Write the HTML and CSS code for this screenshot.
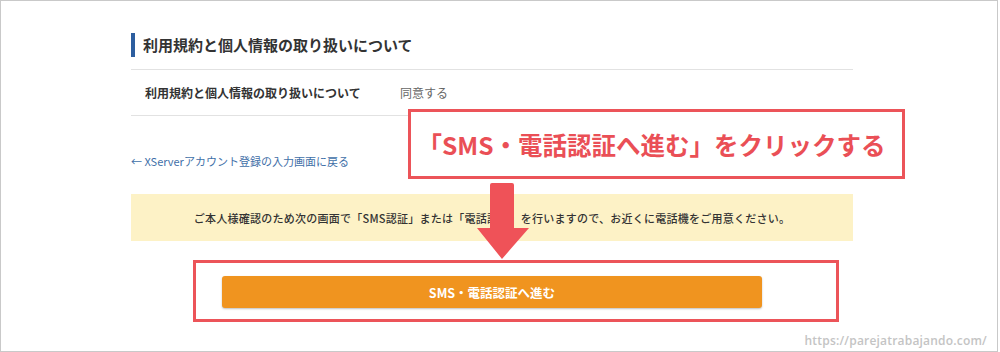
FILE: index.html
```html
<!DOCTYPE html>
<html lang="ja">
<head>
  <meta charset="UTF-8"/>
  <title>利用規約と個人情報の取り扱いについて</title>
  <link rel="stylesheet" href="styles.css">
</head>
<body>
<div class="frame">
  <div class="content">
    <div class="section-head">
      <h2 class="section-title">利用規約と個人情報の取り扱いについて</h2>
    </div>
    <div class="agree-row">
      <span class="agree-label">利用規約と個人情報の取り扱いについて</span>
      <span class="agree-value">同意する</span>
    </div>
    <a class="back-link" href="#">← XServerアカウント登録の入力画面に戻る</a>
    <div class="notice">ご本人様確認のため次の画面で「SMS認証」または「電話認証」を行いますので、お近くに電話機をご用意ください。</div>
    <div class="mark-box">
      <button type="button" class="next-btn">SMS・電話認証へ進む</button>
    </div>
  </div>

  <div class="callout">「SMS・電話認証へ進む」をクリックする</div>
  <svg class="arrow" width="54" height="78" viewBox="0 0 54 78">
    <path d="M16 1 H36 Q38 1 38 3 V46 H53 L26 77 L1 46 H14 V3 Q14 1 16 1 Z" fill="#ef5258"/>
  </svg>
  <span class="watermark">https://parejatrabajando.com/</span>
</div>
</body>
</html>
```

FILE: styles.css
```css
body {
  margin: 0;
  background: #fff;
  font-family: "Noto Sans CJK JP", "Noto Sans", sans-serif;
  color: #333;
}

.frame {
  position: relative;
  width: 998px;
  height: 352px;
  box-sizing: border-box;
  border: 1px solid #c9c9c9;
  overflow: hidden;
}

.content {
  margin-left: 130px;
  width: 722px;
  padding-top: 32px;
}

.section-head {
  padding-bottom: 12px;
  border-bottom: 1px solid #e2e2e2;
}

.section-title {
  margin: 0;
  border-left: 4px solid #2d5e9f;
  padding-left: 8px;
  font-size: 15px;
  line-height: 24px;
  font-weight: bold;
  color: #333;
}

.agree-row {
  display: grid;
  grid-template-columns: 255px 1fr;
  align-items: center;
  height: 45px;
  padding-left: 14px;
  border-bottom: 1px solid #e2e2e2;
  font-size: 12px;
}

.agree-label {
  font-weight: bold;
  color: #333;
}

.agree-value {
  color: #666;
}

.back-link {
  display: block;
  margin-top: 38px;
  font-size: 11px;
  line-height: 14px;
  color: #3f70a8;
  text-decoration: none;
}

.notice {
  margin-top: 26px;
  height: 47px;
  display: flex;
  align-items: center;
  justify-content: center;
  background: #fdf2c6;
  font-size: 11px;
  letter-spacing: 0.25px;
  font-weight: 500;
  color: #333;
}

.mark-box {
  margin: 19px 0 0 62px;
  width: 646px;
  height: 62px;
  box-sizing: border-box;
  border: 3px solid #ec5459;
  padding: 13px 0 0 26px;
}

.next-btn {
  display: block;
  width: 540px;
  height: 32px;
  border: none;
  border-radius: 3px;
  background: #f0941f;
  box-shadow: 0 1px 2px rgba(0, 0, 0, 0.25);
  color: #fff;
  font-family: inherit;
  font-size: 12.5px;
  font-weight: bold;
}

.callout {
  position: absolute;
  left: 407px;
  top: 108px;
  width: 497px;
  height: 70px;
  box-sizing: border-box;
  border: 3px solid #ec5459;
  padding-right: 10px;
  background: #fff;
  display: flex;
  align-items: center;
  justify-content: center;
  color: #ea4f56;
  font-size: 24.5px;
  font-weight: bold;
}

.arrow {
  position: absolute;
  left: 475px;
  top: 181px;
}

.watermark {
  position: absolute;
  right: 10px;
  bottom: 2px;
  font-family: "Open Sans", sans-serif;
  font-size: 12px;
  font-weight: 600;
  color: #c4c4c4;
  letter-spacing: 0.2px;
}
```
